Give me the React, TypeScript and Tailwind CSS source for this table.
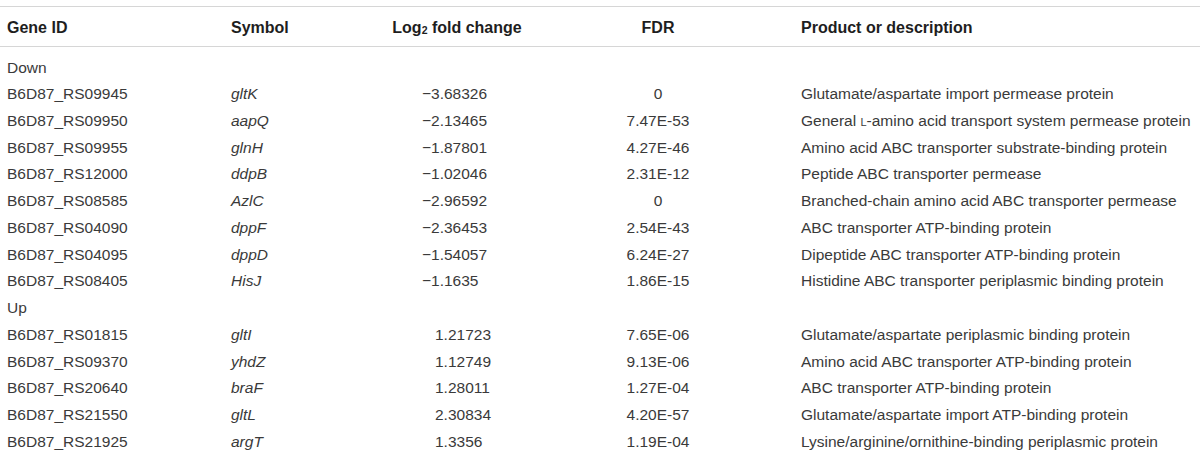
import React from "react";

type Row = { id: string; sym: string; fc: string; fdr: string; desc: React.ReactNode };

const down: Row[] = [
  { id: "B6D87_RS09945", sym: "gltK", fc: "−3.68326", fdr: "0", desc: "Glutamate/aspartate import permease protein" },
  {
    id: "B6D87_RS09950",
    sym: "aapQ",
    fc: "−2.13465",
    fdr: "7.47E-53",
    desc: (
      <>
        General <span className="[font-variant-caps:small-caps]">l</span>-amino acid transport system permease protein
      </>
    ),
  },
  { id: "B6D87_RS09955", sym: "glnH", fc: "−1.87801", fdr: "4.27E-46", desc: "Amino acid ABC transporter substrate-binding protein" },
  { id: "B6D87_RS12000", sym: "ddpB", fc: "−1.02046", fdr: "2.31E-12", desc: "Peptide ABC transporter permease" },
  { id: "B6D87_RS08585", sym: "AzlC", fc: "−2.96592", fdr: "0", desc: "Branched-chain amino acid ABC transporter permease" },
  { id: "B6D87_RS04090", sym: "dppF", fc: "−2.36453", fdr: "2.54E-43", desc: "ABC transporter ATP-binding protein" },
  { id: "B6D87_RS04095", sym: "dppD", fc: "−1.54057", fdr: "6.24E-27", desc: "Dipeptide ABC transporter ATP-binding protein" },
  { id: "B6D87_RS08405", sym: "HisJ", fc: "−1.1635", fdr: "1.86E-15", desc: "Histidine ABC transporter periplasmic binding protein" },
];

const up: Row[] = [
  { id: "B6D87_RS01815", sym: "gltI", fc: "1.21723", fdr: "7.65E-06", desc: "Glutamate/aspartate periplasmic binding protein" },
  { id: "B6D87_RS09370", sym: "yhdZ", fc: "1.12749", fdr: "9.13E-06", desc: "Amino acid ABC transporter ATP-binding protein" },
  { id: "B6D87_RS20640", sym: "braF", fc: "1.28011", fdr: "1.27E-04", desc: "ABC transporter ATP-binding protein" },
  { id: "B6D87_RS21550", sym: "gltL", fc: "2.30834", fdr: "4.20E-57", desc: "Glutamate/aspartate import ATP-binding protein" },
  { id: "B6D87_RS21925", sym: "argT", fc: "1.3356", fdr: "1.19E-04", desc: "Lysine/arginine/ornithine-binding periplasmic protein" },
];

const grid = "grid grid-cols-[224px_156px_154px_248px_1fr] items-center";

function DataRow({ r }: { r: Row }) {
  const neg = r.fc.startsWith("−");
  return (
    <div className={`${grid} h-[26.72px]`}>
      <div className="pl-[7px] whitespace-nowrap">{r.id}</div>
      <div className="pl-[7px] italic whitespace-nowrap">{r.sym}</div>
      <div className={`${neg ? "pl-[42px]" : "pl-[55px]"} whitespace-nowrap`}>{r.fc}</div>
      <div className="text-center whitespace-nowrap">{r.fdr}</div>
      <div className="pl-[19px] whitespace-nowrap">{r.desc}</div>
    </div>
  );
}

function GroupRow({ label }: { label: string }) {
  return (
    <div className="h-[26.72px] flex items-center pl-[7px]">{label}</div>
  );
}

export default function App() {
  return (
    <div
      className="w-[1200px] h-[455px] bg-white overflow-hidden pt-[6px] text-[15.5px] leading-none text-[#3a3a3a]"
      style={{ fontFamily: '"Liberation Sans", Arial, Helvetica, sans-serif' }}
    >
      <div className="border-t border-[#d6d6d6]">
        <div className={`${grid} h-[40px] pt-[2px] text-[16px] font-bold text-[#1e1e1e] border-b border-[#d6d6d6]`}>
          <div className="pl-[7px]">Gene ID</div>
          <div className="pl-[7px]">Symbol</div>
          <div className="text-center whitespace-nowrap">
            Log<sub className="text-[10.5px] relative top-[1px] align-baseline">2</sub> fold change
          </div>
          <div className="text-center">FDR</div>
          <div className="pl-[19px]">Product or description</div>
        </div>
        <div className="pt-[7px]">
          <GroupRow label="Down" />
          {down.map((r) => (
            <DataRow key={r.id} r={r} />
          ))}
          <GroupRow label="Up" />
          {up.map((r) => (
            <DataRow key={r.id} r={r} />
          ))}
        </div>
      </div>
    </div>
  );
}
